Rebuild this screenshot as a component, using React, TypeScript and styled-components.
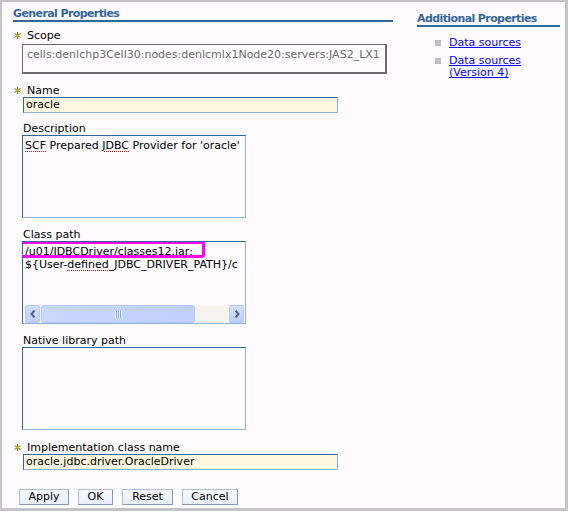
import styled, { createGlobalStyle } from "styled-components";

const GlobalStyle = createGlobalStyle`
  html, body {
    margin: 0;
    padding: 0;
    background: #ffffff;
  }
  body {
    font-family: "DejaVu Sans", Verdana, sans-serif;
    font-size: 11px;
    color: #000;
  }
`;

const Frame = styled.div`
  width: 563px;
  height: 506px;
  box-sizing: content-box;
  border-style: solid;
  border-color: #c4c4c4;
  border-width: 2px 3px 3px 2px;
  background: #fdfbfe;
  display: flex;
  padding: 0;
`;

const MainColumn = styled.div`
  width: 380px;
  margin-left: 11px;
  padding-top: 5px;
  display: flex;
  flex-direction: column;
`;

const SideColumn = styled.div`
  width: 143px;
  margin-left: 24px;
  padding-top: 10px;
`;

const SectionTitle = styled.h2`
  margin: 0;
  font-size: 11px;
  font-weight: bold;
  letter-spacing: -0.6px;
  color: #336699;
  line-height: 13px;
  border-bottom: 2px solid #336699;
`;

const Field = styled.div<{ $top: number }>`
  margin-top: ${p => p.$top}px;
  padding-left: 9px;
  display: flex;
  flex-direction: column;
`;

const Label = styled.div<{ $required?: boolean }>`
  display: flex;
  align-items: center;
  height: 13px;
  line-height: 13px;
  margin-left: ${p => (p.$required ? "-9px" : "1px")};
`;

const StarBox = styled.span`
  width: 14px;
  display: flex;
  justify-content: flex-start;
  padding-left: 1px;
  box-sizing: border-box;
`;

const ReadOnlyBox = styled.div`
  width: 365px;
  height: 30px;
  box-sizing: border-box;
  margin-top: 2px;
  border: 1px solid #6b6b6b;
  border-right-width: 2px;
  border-bottom-width: 2px;
  color: #6b6b6b;
  padding: 3px 0 0 4px;
  line-height: 13px;
  white-space: nowrap;
  overflow: hidden;
`;

const TextInput = styled.div`
  width: 315px;
  height: 16px;
  box-sizing: border-box;
  margin-left: 1px;
  background: #fdf8df;
  border: 1px solid #8db2d9;
  border-top-color: #336699;
  border-left-color: #336699;
  padding: 0 0 0 2px;
  line-height: 14px;
  white-space: nowrap;
`;

const TextArea = styled.div`
  position: relative;
  width: 224px;
  height: 83px;
  box-sizing: border-box;
  border: 1px solid #8db2d9;
  border-top-color: #336699;
  border-left-color: #336699;
  padding: 3px 0 0 2px;
  line-height: 13px;
  white-space: nowrap;
  overflow: hidden;
  display: flex;
  flex-direction: column;
`;

const Lines = styled.div`
  flex: 1;
  overflow: hidden;
`;

const Misspelled = styled.span`
  text-decoration: underline dotted #e00000;
  text-underline-offset: 2px;
`;

const Highlight = styled.div`
  position: absolute;
  left: -4px;
  top: -1px;
  width: 186px;
  height: 17px;
  box-sizing: border-box;
  border: 3px solid #ff00ff;
  border-radius: 3px;
`;

const ScrollBar = styled.div`
  height: 18px;
  margin: 0 1px 0 0;
  display: flex;
  align-items: stretch;
  background: #f4f3ee;
`;

const ScrollButton = styled.div`
  width: 15px;
  box-sizing: border-box;
  border: 1px solid #b6c8f3;
  border-radius: 2px;
  background: linear-gradient(#d3e0fd, #bccffa);
  display: flex;
  align-items: center;
  justify-content: center;
`;

const Thumb = styled.div`
  width: 154px;
  margin-left: 1px;
  box-sizing: border-box;
  border: 1px solid #b6c8f3;
  border-radius: 3px;
  background: linear-gradient(90deg, #c9d8fc, #bfd0fb);
  display: flex;
  align-items: center;
  justify-content: center;
`;

const Track = styled.div`
  flex: 1;
`;

const Grip = styled.div`
  width: 7px;
  height: 7px;
  background: repeating-linear-gradient(90deg, #eef3ff 0 1px, #8ca6dc 1px 2px);
`;

const ButtonRow = styled.div`
  display: flex;
  gap: 9px;
  margin-top: 19px;
  margin-left: 6px;
`;

const Button = styled.button<{ $width: number }>`
  width: ${p => p.$width}px;
  height: 16px;
  padding: 0;
  font-family: "DejaVu Sans", Verdana, sans-serif;
  font-size: 11px;
  line-height: 14px;
  color: #000;
  background: linear-gradient(#f7f9fd, #e9eff8);
  border: 1px solid #7f9db9;
  border-top-color: #a9bfd6;
  border-left-color: #a9bfd6;
`;

const LinkList = styled.ul`
  list-style: none;
  margin: 10px 0 0 18px;
  padding: 0;
  display: flex;
  flex-direction: column;
  gap: 6px;
`;

const LinkItem = styled.li`
  display: flex;
  align-items: flex-start;
`;

const Bullet = styled.span`
  width: 6px;
  height: 6px;
  margin: 3px 8px 0 0;
  background: #c0c0c0;
  flex-shrink: 0;
`;

const Link = styled.a`
  color: #0000ff;
  text-decoration: underline;
  line-height: 12px;
`;

const Star = () => (
  <svg width="7" height="7" viewBox="0 0 7 7">
    <g stroke="#7d6a00" strokeWidth="1">
      <line x1="3.5" y1="0" x2="3.5" y2="7" />
      <line x1="0.5" y1="1.5" x2="6.5" y2="5.5" />
      <line x1="0.5" y1="5.5" x2="6.5" y2="1.5" />
    </g>
    <rect x="2.5" y="2.5" width="2" height="2" fill="#e0c800" />
  </svg>
);

const Arrow = ({ dir }: { dir: "left" | "right" }) => (
  <svg width="6" height="8" viewBox="0 0 6 8">
    <polyline
      points={dir === "left" ? "4.5,0.5 1.5,4 4.5,7.5" : "1.5,0.5 4.5,4 1.5,7.5"}
      fill="none"
      stroke="#4d6185"
      strokeWidth="2"
    />
  </svg>
);

const RequiredLabel = ({ text }: { text: string }) => (
  <Label $required>
    <StarBox>
      <Star />
    </StarBox>
    {text}
  </Label>
);

export default function App() {
  return (
    <>
      <GlobalStyle />
      <Frame>
        <MainColumn>
          <SectionTitle>General Properties</SectionTitle>
          <Field $top={7}>
            <RequiredLabel text="Scope" />
            <ReadOnlyBox>cells:denlchp3Cell30:nodes:denlcmlx1Node20:servers:JAS2_LX1</ReadOnlyBox>
          </Field>
          <Field $top={10}>
            <RequiredLabel text="Name" />
            <TextInput>oracle</TextInput>
          </Field>
          <Field $top={9}>
            <Label>Description</Label>
            <TextArea>
              <Lines>
                <Misspelled>SCF</Misspelled> Prepared <Misspelled>JDBC</Misspelled> Provider for 'oracle'
              </Lines>
            </TextArea>
          </Field>
          <Field $top={10}>
            <Label>Class path</Label>
            <TextArea>
              <Lines>
                <div>
                  /u01/<Misspelled>JDBCDriver</Misspelled>/classes12.jar:
                </div>
                <div>
                  {"${User-"}
                  <Misspelled>defined</Misspelled>
                  {"_JDBC_DRIVER_PATH}/c"}
                </div>
              </Lines>
              <ScrollBar>
                <ScrollButton>
                  <Arrow dir="left" />
                </ScrollButton>
                <Thumb>
                  <Grip />
                </Thumb>
                <Track />
                <ScrollButton>
                  <Arrow dir="right" />
                </ScrollButton>
              </ScrollBar>
              <Highlight />
            </TextArea>
          </Field>
          <Field $top={10}>
            <Label>Native library path</Label>
            <TextArea />
          </Field>
          <Field $top={11}>
            <RequiredLabel text="Implementation class name" />
            <TextInput>oracle.jdbc.driver.OracleDriver</TextInput>
          </Field>
          <ButtonRow>
            <Button $width={50}>Apply</Button>
            <Button $width={35}>OK</Button>
            <Button $width={51}>Reset</Button>
            <Button $width={56}>Cancel</Button>
          </ButtonRow>
        </MainColumn>
        <SideColumn>
          <SectionTitle>Additional Properties</SectionTitle>
          <LinkList>
            <LinkItem>
              <Bullet />
              <Link href="#">Data sources</Link>
            </LinkItem>
            <LinkItem>
              <Bullet />
              <Link href="#">
                Data sources
                <br />
                (Version 4)
              </Link>
            </LinkItem>
          </LinkList>
        </SideColumn>
      </Frame>
    </>
  );
}
